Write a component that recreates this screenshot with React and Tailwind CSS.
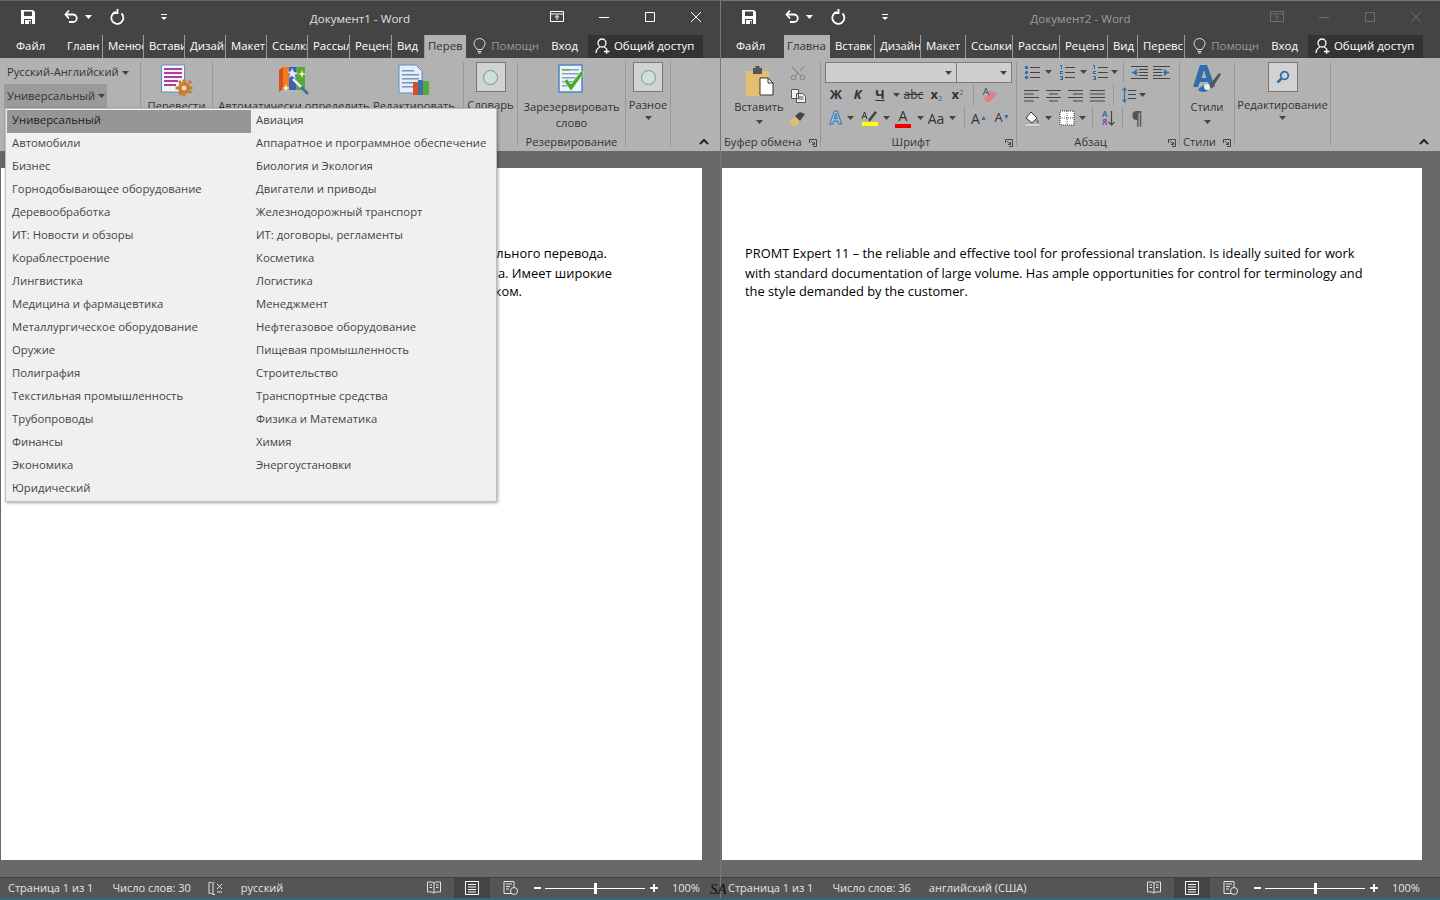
import React from 'react'
import { Scissors } from 'lucide-react'

const menuLeft = ['Универсальный', 'Автомобили', 'Бизнес', 'Горнодобывающее оборудование', 'Деревообработка', 'ИТ: Новости и обзоры', 'Кораблестроение', 'Лингвистика', 'Медицина и фармацевтика', 'Металлургическое оборудование', 'Оружие', 'Полиграфия', 'Текстильная промышленность', 'Трубопроводы', 'Финансы', 'Экономика', 'Юридический']
const menuRight = ['Авиация', 'Аппаратное и программное обеспечение', 'Биология и Экология', 'Двигатели и приводы', 'Железнодорожный транспорт', 'ИТ: договоры, регламенты', 'Косметика', 'Логистика', 'Менеджмент', 'Нефтегазовое оборудование', 'Пищевая промышленность', 'Строительство', 'Транспортные средства', 'Физика и Математика', 'Химия', 'Энергоустановки']

const leftTabs = [
  { t: 'Главн', w: 'w-[41px]' }, { t: 'Менюс', w: 'w-[41px]' }, { t: 'Встави', w: 'w-[41px]' }, { t: 'Дизайн', w: 'w-[41px]' },
  { t: 'Макет', w: 'w-[41px]' }, { t: 'Ссылки', w: 'w-[41px]' }, { t: 'Рассыл', w: 'w-[42px]' }, { t: 'Реценз', w: 'w-[42px]' }, { t: 'Вид', w: 'w-[33px]' },
]
const rightTabs = [
  { t: 'Вставк', w: 'w-[45px]' }, { t: 'Дизайн', w: 'w-[46px]' }, { t: 'Макет', w: 'w-[45px]' }, { t: 'Ссылки', w: 'w-[47px]' },
  { t: 'Рассыл', w: 'w-[47px]' }, { t: 'Реценз', w: 'w-[48px]' }, { t: 'Вид', w: 'w-[30px]' }, { t: 'Перевс', w: 'w-[47px]' },
]

const Arrow = ({ cls = 'text-[#444]' }) => (
  <svg width="7" height="4" viewBox="0 0 7 4" className={`shrink-0 ${cls}`}><path d="M0 0h7L3.500 4z" fill="currentColor" /></svg>
)

const Launcher = () => (
  <svg width="8" height="8" viewBox="0 0 8 8" fill="none" stroke="#444" strokeWidth="1"><path d="M.5 4V.5H7.500V7.500H4" /><path d="M2 2l3.500 3.500M5.500 3v2.500H3" /></svg>
)

const Collapse = () => (
  <svg width="10" height="6" viewBox="0 0 10 6" fill="none" stroke="#222" strokeWidth="2"><path d="M1 5l4-4 4 4" /></svg>
)

const Sep = () => <div className="w-px h-[84px] mt-1 bg-[#989898] shrink-0" />

const Group = ({ w, label, launcher, children }) => (
  <div className={`${w} h-[93px] flex flex-col shrink-0`}>
    <div className="h-[76px] overflow-hidden">{children}</div>
    <div className={`h-[17px] relative flex items-center justify-center text-[11.200px] text-[#333] leading-none whitespace-nowrap pb-[1px] ${launcher ? 'pr-[15px]' : ''}`}>
      {label}
      {launcher && <span className="absolute right-[3px] top-[5px]"><Launcher /></span>}
    </div>
  </div>
)

const Circle = () => (
  <div className="w-[30px] h-[30px] border border-[#777] bg-[#d2d2d2] flex items-center justify-center">
    <div className="w-[15px] h-[15px] rounded-full border border-[#6f9a8c] bg-[#cfe0da]" />
  </div>
)

const QuickBar = () => (
  <div className="flex items-center pl-[20px] pb-[3px] text-white">
    <svg width="16" height="16" viewBox="0 0 16 16"><path d="M1 1h12l2 2v12H1z" fill="#fff" /><path d="M4 2.500h8v4.500H4z" fill="#444" /><path d="M4 10h8v5H4z" fill="#444" /><path d="M5 11h6v4H5z" fill="#fff" /><path d="M9 12h1.500v3H9z" fill="#444" /></svg>
    <svg width="16" height="16" viewBox="0 0 16 16" fill="none" stroke="#fff" strokeWidth="1.800" className="ml-[27px]"><path d="M2.500 5.500H10a3.700 3.700 0 0 1 0 7.500H6" /><path d="M6 1.500L2.500 5.500 6 9.500" /></svg>
    <span className="ml-[6px]"><Arrow cls="text-white" /></span>
    <svg width="16" height="16" viewBox="0 0 16 16" fill="none" stroke="#fff" strokeWidth="1.800" className="ml-[18px]"><path d="M6 3a6 6 0 1 0 5.500 1.500" /><path d="M6.500 .5v4.500H2" transform="translate(1 -1)" /></svg>
    <svg width="8" height="8" viewBox="0 0 8 8" className="ml-[34px]"><path d="M1 1h6v1H1z" fill="#fff" /><path d="M1 4h6L4 7z" fill="#fff" /></svg>
  </div>
)

const WindowControls = ({ dim }) => {
  const c = dim ? '#6e6e6e' : '#ffffff'
  return (
    <div className="flex items-center justify-end pb-[3px]" style={{ color: c }}>
      <svg width="14" height="12" viewBox="0 0 14 12" fill="none" stroke="currentColor"><path d="M.5 .5h13v10H.5zM.5 3h13M7 9V4.500M4.800 6.500L7 4.500l2.200 2" /></svg>
      <svg width="12" height="12" viewBox="0 0 12 12" fill="none" stroke="currentColor" className="ml-[34px]"><path d="M1 6.500h10" /></svg>
      <svg width="12" height="12" viewBox="0 0 12 12" fill="none" stroke="currentColor" className="ml-[34px]"><path d="M1.500 1.500h9v9h-9z" /></svg>
      <svg width="12" height="12" viewBox="0 0 12 12" fill="none" stroke="currentColor" className="ml-[34px] mr-[18px]"><path d="M1 1l10 10M11 1L1 11" /></svg>
    </div>
  )
}

const TitleBar = ({ title, dim }) => (
  <div className="h-[34px] grid grid-cols-[1fr_auto_1fr] items-center">
    <QuickBar />
    <div className={`text-[11.600px] pt-[1px] ${dim ? 'text-[#9c9c9c]' : 'text-[#e0e0e0]'}`}>{title}</div>
    <WindowControls dim={dim} />
  </div>
)

const Tab = ({ t, w }) => (
  <div className={`${w} shrink-0 h-[23px] flex items-center pl-[5px] pb-[2px] overflow-hidden whitespace-nowrap border-r border-[#9a9a9a] text-[11.400px] text-white`}>
    {t}
  </div>
)

const ActiveTab = ({ t, w }) => (
  <div className={`${w} shrink-0 h-[24px] flex items-center pl-[3px] pb-[2px] overflow-hidden whitespace-nowrap bg-[#b2b2b2] text-[11.400px] text-[#333]`}>
    {t}
  </div>
)

const TabsRight = () => (
  <div className="ml-auto flex items-center h-[23px] pb-[1px]">
    <svg width="13" height="16" viewBox="0 0 13 16" fill="none" stroke="#ddd" className="mr-[5px]"><path d="M4 11.500C3 9 1 8 1 5.500a5.500 5 0 0 1 11 0C12 8 10 9 9 11.500zM4.500 13.500h4M5 15h3" /></svg>
    <span className="text-[11.400px] text-[#9a9a9a] w-[50px] overflow-hidden whitespace-nowrap">Помощн</span>
    <span className="text-[11.400px] text-white ml-[10px]">Вход</span>
    <div className="ml-[10px] mr-[17px] h-[23px] w-[115px] bg-[#333] flex items-center pl-[7px] pb-[1px] text-[11.400px] text-white whitespace-nowrap">
      <svg width="15" height="16" viewBox="0 0 15 16" fill="none" stroke="#fff" strokeWidth="1.300" className="mr-[4px]"><circle cx="7" cy="5" r="4" /><path d="M1 15c0-3 2-5 4-6M9 9c1 .5 2 1.200 2.500 2M9 13.500h5.500M11.700 10.800v5" /></svg>
      Общий доступ
    </div>
  </div>
)

const BooksIcon = () => (
  <svg width="32" height="32" viewBox="0 0 32 32">
    <path d="M1 6l4-3v22l-4 3z" fill="#d9501e" /><path d="M5 3h6v22H5z" fill="#ef7d20" />
    <path d="M11 3h7v23h-7z" fill="#3f5fb0" /><path d="M18 3h9v23h-9z" fill="#58a83a" />
    <path d="M14 4l2 4 4 1-3 2 1 4-4-3-3 2 1-4-2-2 3-1z" fill="#d6e8ff" /><path d="M24 6l1 3 3 1-3 1-1 3-1-3-3-1 3-1z" fill="#f6f2b0" />
    <path d="M8 20l1 3 3 1-3 1-1 3-1-3-3-1 3-1z" fill="#fbf7c0" />
    <path d="M15 15l15 15" stroke="#3a6ea8" strokeWidth="2.500" /><path d="M15 15l8 8" stroke="#e8eef4" strokeWidth="2.500" />
  </svg>
)

const TranslateIcon = () => (
  <svg width="33" height="33" viewBox="0 0 33 33">
    <path d="M1.500 1h23v27h-23z" fill="#f4f4f4" stroke="#5d8fc4" />
    <path d="M4 4h18v2H4zM4 8h18v2H4zM4 12h18v2H4zM4 16h14v2H4zM4 20h12v2H4z" fill="#a9409a" />
    <g fill="#c87a30"><circle cx="24" cy="24" r="6" /><path d="M22.500 15.500h3v3h-3zM22.500 29.500h3v3h-3zM15.500 22.500h3v3h-3zM29.500 22.500h3v3h-3zM18 18l2-2 2 2-2 2zM28 28l2-2 2 2-2 2zM28 18l2-2 2 2-2 2zM18 28l2 0 2 2-2 2z" /></g>
    <circle cx="24" cy="24" r="2.500" fill="#f5dcae" />
  </svg>
)

const EditDocIcon = () => (
  <svg width="32" height="32" viewBox="0 0 32 32">
    <path d="M1 1h17l6 6v22H1z" fill="#e6eef7" stroke="#5d8fc4" />
    <path d="M4 6h12v1.500H4zM4 10h17v1.500H4zM4 14h17v1.500H4zM4 18h12v1.500H4zM4 22h11v1.500H4z" fill="#6f97c2" />
    <path d="M15 18h5v13h-5z" fill="#d9501e" /><path d="M20 16h5v15h-5z" fill="#3f6fb0" /><path d="M25 17h6v14h-6z" fill="#58a83a" />
  </svg>
)

const ReserveIcon = () => (
  <svg width="27" height="30" viewBox="0 0 27 30">
    <path d="M1 1h23v27H1z" fill="#eef3f8" stroke="#4f86c0" strokeWidth="1.500" />
    <path d="M4 5h17v1.500H4zM4 9h17v1.500H4zM4 13h17v1.500H4zM4 17h12v1.500H4zM4 21h8v1.500H4z" fill="#7ea5c9" />
    <path d="M4 5h8v1.500H4z" fill="#6fae4a" />
    <path d="M6 17l3-2 4 5 10-13 3 2-13 18z" fill="#46a82e" stroke="#eafbe0" strokeWidth=".6" />
  </svg>
)

const LeftRibbon = () => (
  <div className="h-[93px] bg-[#b2b2b2] flex text-[#333] relative">
    <div className="w-[140px] shrink-0 text-[11.200px] pt-[3px] pl-[4px]">
      <div className="h-[23px] flex items-center gap-[3px] pl-[3px]">Русский-Английский <Arrow /></div>
      <div className="h-[24px] w-[103px] bg-[#9a9a9a] flex items-center gap-[3px] pl-[3px]">Универсальный <Arrow /></div>
    </div>
    <Sep />
    <Group w="w-[71px]" label="">
      <div className="flex flex-col items-center pt-[6px] text-[11.200px] leading-[16px]">
        <TranslateIcon />
        <span className="mt-[1px]">Перевести</span>
      </div>
    </Group>
    <Sep />
    <Group w="w-[250px]" label="">
      <div className="flex pt-[6px] text-[11.200px] leading-[16px] whitespace-nowrap">
        <div className="w-[162px] flex flex-col items-center"><BooksIcon /><span className="mt-[2px]">Автоматически определить</span></div>
        <div className="w-[78px] flex flex-col items-center"><EditDocIcon /><span className="mt-[2px]">Редактировать</span></div>
      </div>
    </Group>
    <Sep />
    <Group w="w-[53px]" label="">
      <div className="flex flex-col items-center pt-[4px] text-[11.200px] leading-[16px]"><Circle /><span className="mt-[5px]">Словарь</span></div>
    </Group>
    <Sep />
    <Group w="w-[107px]" label="Резервирование">
      <div className="flex flex-col items-center pt-[6px] text-[11.200px] leading-[16px] text-center">
        <ReserveIcon />
        <span className="mt-[5px]">Зарезервировать<br />слово</span>
      </div>
    </Group>
    <Sep />
    <Group w="w-[44px]" label="">
      <div className="flex flex-col items-center pt-[4px] text-[11.200px] leading-[16px]"><Circle /><span className="mt-[5px]">Разное</span><span className="mt-[3px]"><Arrow /></span></div>
    </Group>
    <Sep />
    <div className="ml-auto mr-[11px] mt-[81px]"><Collapse /></div>
  </div>
)

const PasteIcon = () => (
  <svg width="29" height="30" viewBox="0 0 29 30">
    <path d="M1 5h23v25H1z" fill="#e2bd72" /><path d="M8 2h9v6H8z" fill="#555" /><path d="M10.500 0h4v3h-4z" fill="#555" />
    <path d="M15 12h8l5 5v12H15z" fill="#fff" stroke="#333" /><path d="M23 12v5h5" fill="none" stroke="#333" />
  </svg>
)

const BulletList = ({ numbered, multi }) => (
  <svg width="16" height="16" viewBox="0 0 16 16">
    <path d="M6 3h10v1H6zM6 8h10v1H6zM6 13h10v1H6z" fill="#444" />
    {numbered || multi ? <path d="M1 1h2v4H2V2H1zM1 7h3v1H2v1h2v1H1zM1 12h3v4H1v-1h2v-.5H2v-1h1V13H1z" fill="#2f6ea8" /> : <g fill="#2f6ea8"><circle cx="2.500" cy="3.500" r="1.700" /><circle cx="2.500" cy="8.500" r="1.700" /><circle cx="2.500" cy="13.500" r="1.700" /></g>}
  </svg>
)

const Indent = ({ flip }) => (
  <svg width="17" height="14" viewBox="0 0 17 14" style={flip ? { transform: 'scaleX(-1)' } : undefined}>
    <path d="M0 1h17v1H0zM8 4h9v1H8zM8 7h9v1H8zM8 10h9v1H8zM0 13h17v1H0z" fill="#444" /><path d="M1 7.500h6M6 4.500l-3 3 3 3" fill="none" stroke="#2f6ea8" strokeWidth="1.500" />
  </svg>
)

const Align = ({ mode }) => {
  const d = {
    left: 'M0 1h15v1H0zM0 4.500h10v1H0zM0 8h15v1H0zM0 11.500h10v1H0z',
    center: 'M0 1h15v1H0zM3 4.500h9v1H3zM0 8h15v1H0zM3 11.500h9v1H3z',
    right: 'M0 1h15v1H0zM5 4.500h10v1H5zM0 8h15v1H0zM5 11.500h10v1H5z',
    full: 'M0 1h15v1H0zM0 4.500h15v1H0zM0 8h15v1H0zM0 11.500h15v1H0z',
  }[mode]
  return <svg width="15" height="13" viewBox="0 0 15 13"><path d={d} fill="#444" /></svg>
}

const Cell = ({ w, children }) => <div className={`${w} h-[22px] shrink-0 flex items-center justify-center`}>{children}</div>
const MiniSep = () => <div className="w-px h-[22px] bg-[#989898] shrink-0" />

const RightRibbon = () => (
  <div className="h-[93px] bg-[#b2b2b2] flex text-[#333] relative">
    <Group w="w-[99px]" label={<span className="absolute left-[3px]">Буфер обмена</span>} launcher>
      <div className="flex">
        <div className="w-[68px] pl-[8px] flex flex-col items-center pt-[8px] text-[11.200px] leading-[16px]">
          <PasteIcon />
          <span className="mt-[3px]">Вставить</span>
          <span className="mt-[5px]"><Arrow /></span>
        </div>
        <div className="flex flex-col items-center pt-[3px]">
          <div className="h-[23px] flex items-center"><Scissors size={18} strokeWidth={1.500} className="text-[#8a8a8a] -rotate-90" /></div>
          <div className="h-[23px] flex items-center">
            <svg width="15" height="14" viewBox="0 0 15 14" fill="#f3f3f3" stroke="#555"><path d="M.5 .5h7v9h-7zM5.500 4.500h6l3 3v6h-9z" /><path d="M7.500 8h5M7.500 10h5" /></svg>
          </div>
          <div className="h-[23px] flex items-center">
            <svg width="16" height="14" viewBox="0 0 16 14"><path d="M0 9l5-5 5 5-4 5H2z" fill="#e2bd72" /><path d="M5 4l5-4 5 2-5 7z" fill="#444" /></svg>
          </div>
        </div>
      </div>
    </Group>
    <Sep />
    <Group w="w-[195px]" label="Шрифт" launcher>
      <div className="pl-[4px] pt-[4px]">
        <div className="flex h-[21px]">
          <div className="w-[132px] h-[21px] border border-[#7c7c7c] bg-[#cfcfcf] flex items-center justify-end pr-[4px]"><Arrow /></div>
          <div className="w-[55px] h-[21px] border border-[#7c7c7c] border-l-0 bg-[#cfcfcf] flex items-center justify-end pr-[4px]"><Arrow /></div>
        </div>
        <div className="flex items-center mt-[1px] text-[#333]">
          <Cell w="w-[22px]"><b className="text-[13px]">Ж</b></Cell>
          <Cell w="w-[21px]"><b className="italic text-[13px]">К</b></Cell>
          <Cell w="w-[24px]"><b className="underline text-[13px]">Ч</b></Cell>
          <Cell w="w-[9px]"><Arrow /></Cell>
          <Cell w="w-[25px]"><span className="text-[12px] line-through">abc</span></Cell>
          <Cell w="w-[21px]"><b className="text-[13px]">x<sub className="text-[8px] text-[#2f6ea8] font-normal">2</sub></b></Cell>
          <Cell w="w-[21px]"><b className="text-[13px]">x<sup className="text-[8px] text-[#2f6ea8] font-normal">2</sup></b></Cell>
          <div className="w-[5px]" /><MiniSep />
          <Cell w="w-[32px]">
            <svg width="16" height="16" viewBox="0 0 16 16"><path d="M2 11l7-7 6 3-7 8H4z" fill="#e0808c" /><path d="M1 8l3-7 3 7M2.300 5.500h3.400" fill="none" stroke="#555" /></svg>
          </Cell>
        </div>
        <div className="flex items-center mt-[1px] text-[#333]">
          <Cell w="w-[21px]"><span className="text-[17px] font-bold text-[#aac8e8] [-webkit-text-stroke:1px_#3f78b0]">A</span></Cell>
          <Cell w="w-[9px]"><Arrow /></Cell>
          <Cell w="w-[28px]">
            <svg width="17" height="17" viewBox="0 0 17 17"><path d="M7 10L14 1l2 1.500-7 9z" fill="#444" /><path d="M1 9l2.500-7 2.500 7M2 6.500h3" fill="none" stroke="#333" /><path d="M1 12h16v4H1z" fill="#ffff00" /></svg>
          </Cell>
          <Cell w="w-[7px]"><Arrow /></Cell>
          <Cell w="w-[26px]">
            <div className="flex flex-col items-center leading-none"><span className="text-[14px] h-[14px] leading-[14px]">А</span><span className="w-[16px] h-[4px] bg-[#ee0000] mt-[1px]" /></div>
          </Cell>
          <Cell w="w-[8px]"><Arrow /></Cell>
          <Cell w="w-[24px]"><span className="text-[14px]">Аа</span></Cell>
          <Cell w="w-[8px]"><Arrow /></Cell>
          <div className="w-[8px]" /><MiniSep />
          <Cell w="w-[28px]"><span className="text-[14px]">A<sup className="text-[#2f6ea8] text-[7px]">▲</sup></span></Cell>
          <Cell w="w-[18px]"><span className="text-[13px]">A<sup className="text-[#2f6ea8] text-[7px]">▼</sup></span></Cell>
        </div>
      </div>
    </Group>
    <Sep />
    <Group w="w-[162px]" label="Абзац" launcher>
      <div className="pl-[7px] pt-[4px]">
        <div className="flex items-center h-[20px]">
          <BulletList /><span className="ml-[5px]"><Arrow /></span>
          <span className="ml-[7px]"><BulletList numbered /></span><span className="ml-[5px]"><Arrow /></span>
          <span className="ml-[5px]"><BulletList multi /></span><span className="ml-[3px]"><Arrow /></span>
          <div className="w-px h-[20px] bg-[#989898] ml-[5px]" />
          <span className="ml-[7px]"><Indent /></span><span className="ml-[5px]"><Indent flip /></span>
        </div>
        <div className="flex items-center h-[22px] mt-[2px]">
          <Align mode="left" /><span className="ml-[7px]"><Align mode="center" /></span>
          <span className="ml-[7px]"><Align mode="right" /></span><span className="ml-[7px]"><Align mode="full" /></span>
          <div className="w-px h-[22px] bg-[#989898] ml-[8px]" />
          <svg width="14" height="16" viewBox="0 0 14 16" className="ml-[8px]"><path d="M6 3h8v1H6zM6 7h8v1H6zM6 11h8v1H6z" fill="#444" /><path d="M2.500 1v14M.500 3.500l2-2.500 2 2.500M.500 12.500l2 2.500 2-2.500" fill="none" stroke="#2f6ea8" strokeWidth="1.200" /></svg>
          <span className="ml-[3px]"><Arrow /></span>
        </div>
        <div className="flex items-center h-[22px] mt-[1px]">
          <svg width="17" height="17" viewBox="0 0 17 17"><path d="M2 8l5-6 6 6-5 5z" fill="#fff" stroke="#333" /><path d="M13 9c2 2 2 4 1 4s-2-2-1-4z" fill="#2f6ea8" /><path d="M1 14h15v2H1z" fill="#eee" stroke="#888" strokeWidth=".5" /></svg>
          <span className="ml-[4px]"><Arrow /></span>
          <svg width="16" height="16" viewBox="0 0 16 16" className="ml-[7px]"><path d="M1 1h14v14H1z" fill="#fff" stroke="#333" strokeDasharray="1 1" /><path d="M8 1v14M1 8h14" stroke="#555" strokeDasharray="1 1" /></svg>
          <span className="ml-[4px]"><Arrow /></span>
          <div className="w-px h-[22px] bg-[#989898] ml-[6px]" />
          <span className="ml-[9px] flex items-center">
            <span className="flex flex-col text-[8px] leading-[8px] font-bold"><span className="text-[#2f6ea8]">А</span><span className="text-[#7a4fa0]">Я</span></span>
            <svg width="7" height="15" viewBox="0 0 7 15" fill="none" stroke="#444" strokeWidth="1.200"><path d="M3.500 0v14M.5 11l3 3 3-3" /></svg>
          </span>
          <div className="w-px h-[22px] bg-[#989898] ml-[7px]" />
          <span className="ml-[9px] text-[17px] leading-none text-[#555] font-bold">¶</span>
        </div>
      </div>
    </Group>
    <Sep />
    <Group w="w-[54px]" label="Стили" launcher>
      <div className="flex flex-col items-center pt-[5px] text-[11.200px] leading-[16px]">
        <svg width="30" height="32" viewBox="0 0 30 32"><path d="M8 2h7l8 22h-5l-2-5H8l-2 5H1z" fill="#2f6ea8" /><path d="M9.500 15h5L12 7z" fill="#b2b2b2" /><path d="M16 24l11-14 2 1.500-9 14z" fill="#555" /><path d="M6 27c3-5 9-6 11-3 1 4-6 7-11 3z" fill="#2f6ea8" /><circle cx="15" cy="24" r="3" fill="#eee" /></svg>
        <span className="mt-[4px]">Стили</span>
        <span className="mt-[5px]"><Arrow /></span>
      </div>
    </Group>
    <Sep />
    <Group w="w-[95px]" label="">
      <div className="flex flex-col items-center pt-[4px] text-[11.200px] leading-[16px]">
        <div className="w-[30px] h-[30px] border border-[#777] bg-[#d2d2d2] flex items-center justify-center">
          <svg width="14" height="14" viewBox="0 0 14 14" fill="none" stroke="#2f6ea8"><circle cx="8.500" cy="5.500" r="3.800" strokeWidth="1.800" /><path d="M5.500 8.500L1.500 12.500" strokeWidth="2.500" /></svg>
        </div>
        <span className="mt-[5px] whitespace-nowrap">Редактирование</span>
        <span className="mt-[3px]"><Arrow /></span>
      </div>
    </Group>
    <Sep />
    <div className="ml-auto mr-[11px] mt-[81px]"><Collapse /></div>
  </div>
)

const StatusBar = ({ page, words, lang, proof, x }) => (
  <div className={`h-[21px] bg-[#555] border-t border-[#444] flex items-center text-[11px] text-[#e4e4e4] whitespace-nowrap ${x}`}>
    <span>{page}</span>
    <span className="ml-[19px]">{words}</span>
    {proof && (
      <svg width="15" height="15" viewBox="0 0 15 15" fill="none" stroke="#e4e4e4" className="ml-[17px]"><path d="M1 1.500c2-.5 3 0 4 1v11c-1-1-2-1.500-4-1zM5 2.500c.5-.5 1-.8 1.500-1M5 13.500h2" /><path d="M9 3l5 5M14 3L9 8M9 11l5 0" /></svg>
    )}
    <span className="ml-[18px]">{lang}</span>
    <div className="ml-auto flex items-center h-[20px]">
      <svg width="14" height="14" viewBox="0 0 14 14" fill="none" stroke="#e4e4e4"><path d="M7 2C5.500 1 3 .7 .5 1v10c2.500-.3 5 0 6.500 1 1.500-1 4-1.300 6.500-1V1C11 .7 8.500 1 7 2zM7 2v10M2.500 4h2.500M2.500 6.500h2.500M9 4h2.500M9 6.500h2.500" /></svg>
      <div className="ml-[13px] w-[36px] h-[20px] bg-[#444] flex items-center justify-center">
        <svg width="14" height="14" viewBox="0 0 14 14" fill="none" stroke="#fff"><path d="M.5 .5h13v13H.5zM3 3.500h8M3 6h8M3 8.500h8M3 11h8" /></svg>
      </div>
      <svg width="15" height="14" viewBox="0 0 15 14" fill="none" stroke="#e4e4e4" className="ml-[13px]"><path d="M1 .5h10v12H1zM3 3h6M3 5.500h4M3 8h3" /><circle cx="11" cy="10" r="3.500" fill="#555" /></svg>
      <span className="ml-[16px] w-[7px] h-[2px] bg-white" />
      <div className="ml-[4px] w-[100px] h-px bg-white flex items-center justify-center">
        <span className="w-[3px] h-[11px] bg-white" />
      </div>
      <svg width="8" height="8" viewBox="0 0 8 8" className="ml-[5px]"><path d="M3 0h2v3h3v2H5v3H3V5H0V3h3z" fill="#fff" /></svg>
      <span className="ml-[14px] mr-[20px] w-[28px]">100%</span>
    </div>
  </div>
)

export default function App() {
  return (
    <div className="w-[1440px] h-[900px] overflow-hidden relative bg-[#2f6a80] font-['Open_Sans','Noto_Sans',sans-serif]">
      <div className="flex h-[898px]">
        {/* left window, translation tab */}
        <div className="w-[720px] shrink-0 flex flex-col bg-[#444] border-t border-[#666]">
          <TitleBar title="Документ1 - Word" />
          <div className="h-[23px] flex items-start">
            <div className="w-[62px] shrink-0 h-[23px] pl-[16px] pb-[1px] flex items-center text-[11.400px] text-white">Файл</div>
            {leftTabs.map((tab) => <Tab key={tab.t} {...tab} />)}
            <ActiveTab t="Перев" w="w-[41px]" />
            <TabsRight />
          </div>
          <LeftRibbon />
          <div className="flex-1 bg-[#696969] pt-[17px] pl-px">
            <div className="w-[701px] h-[692px] bg-white pl-[44px] pt-[76px] text-[12.850px] text-black whitespace-nowrap">
              <div className="h-[20px] w-[562px] flex justify-end leading-[18px]">PROMT Expert 11 – надежный и эффективный инструмент для профессионального перевода.</div>
              <div className="h-[18px] w-[567px] flex justify-end leading-[18px]">Идеально подходит для работы с типовой документацией большого объема. Имеет широкие</div>
              <div className="h-[18px] w-[477px] flex justify-end leading-[18px]">возможности контроля терминологии и стиля, требуемого заказчиком.</div>
            </div>
          </div>
          <StatusBar page="Страница 1 из 1" words="Число слов: 30" lang="русский" proof x="pl-[8px]" />
        </div>

        {/* right window, home tab */}
        <div className="w-[720px] shrink-0 flex flex-col bg-[#444] border-t border-l border-[#777]">
          <TitleBar title="Документ2 - Word" dim />
          <div className="h-[23px] flex items-start">
            <div className="w-[63px] shrink-0 h-[23px] pl-[15px] pb-[1px] flex items-center text-[11.400px] text-white">Файл</div>
            <ActiveTab t="Главна" w="w-[46px]" />
            {rightTabs.map((tab) => <Tab key={tab.t} {...tab} />)}
            <TabsRight />
          </div>
          <RightRibbon />
          <div className="flex-1 bg-[#696969] pt-[17px] pl-px">
            <div className="w-[700px] h-[692px] bg-white pl-[23px] pt-[76px] text-[12.850px] text-black">
              <div className="h-[20px] leading-[18px] whitespace-nowrap">PROMT Expert 11 – the reliable and effective tool for professional translation. Is ideally suited for work</div>
              <div className="h-[18px] leading-[18px] whitespace-nowrap">with standard documentation of large volume. Has ample opportunities for control for terminology and</div>
              <div className="h-[18px] leading-[18px] whitespace-nowrap">the style demanded by the customer.</div>
            </div>
          </div>
          <StatusBar page="Страница 1 из 1" words="Число слов: 36" lang="английский (США)" x="pl-[7px]" />
        </div>
      </div>

      {/* open dropdown of topics */}
      <div className="absolute left-[5px] top-[108px] w-[492px] h-[394px] bg-[#f0f0f0] border border-[#bdbdbd] shadow-[1px_1px_3px_rgba(0,0,0,.35)] flex p-px text-[11.300px] text-[#444] whitespace-nowrap">
        <div className="w-[244px] shrink-0">
          {menuLeft.map((item, i) => (
            <div key={item} className={`h-[23px] flex items-center pl-[5px] pb-[2px] ${i === 0 ? 'bg-[#969696] text-[#222]' : ''}`}>{item}</div>
          ))}
        </div>
        <div className="pl-[5px]">
          {menuRight.map((item) => <div key={item} className="h-[23px] flex items-center pb-[2px]">{item}</div>)}
        </div>
      </div>

      <span className="absolute left-[710px] top-[880px] font-['Liberation_Serif',serif] italic text-[15px] leading-[18px] text-[#111]">SA</span>
    </div>
  )
}
